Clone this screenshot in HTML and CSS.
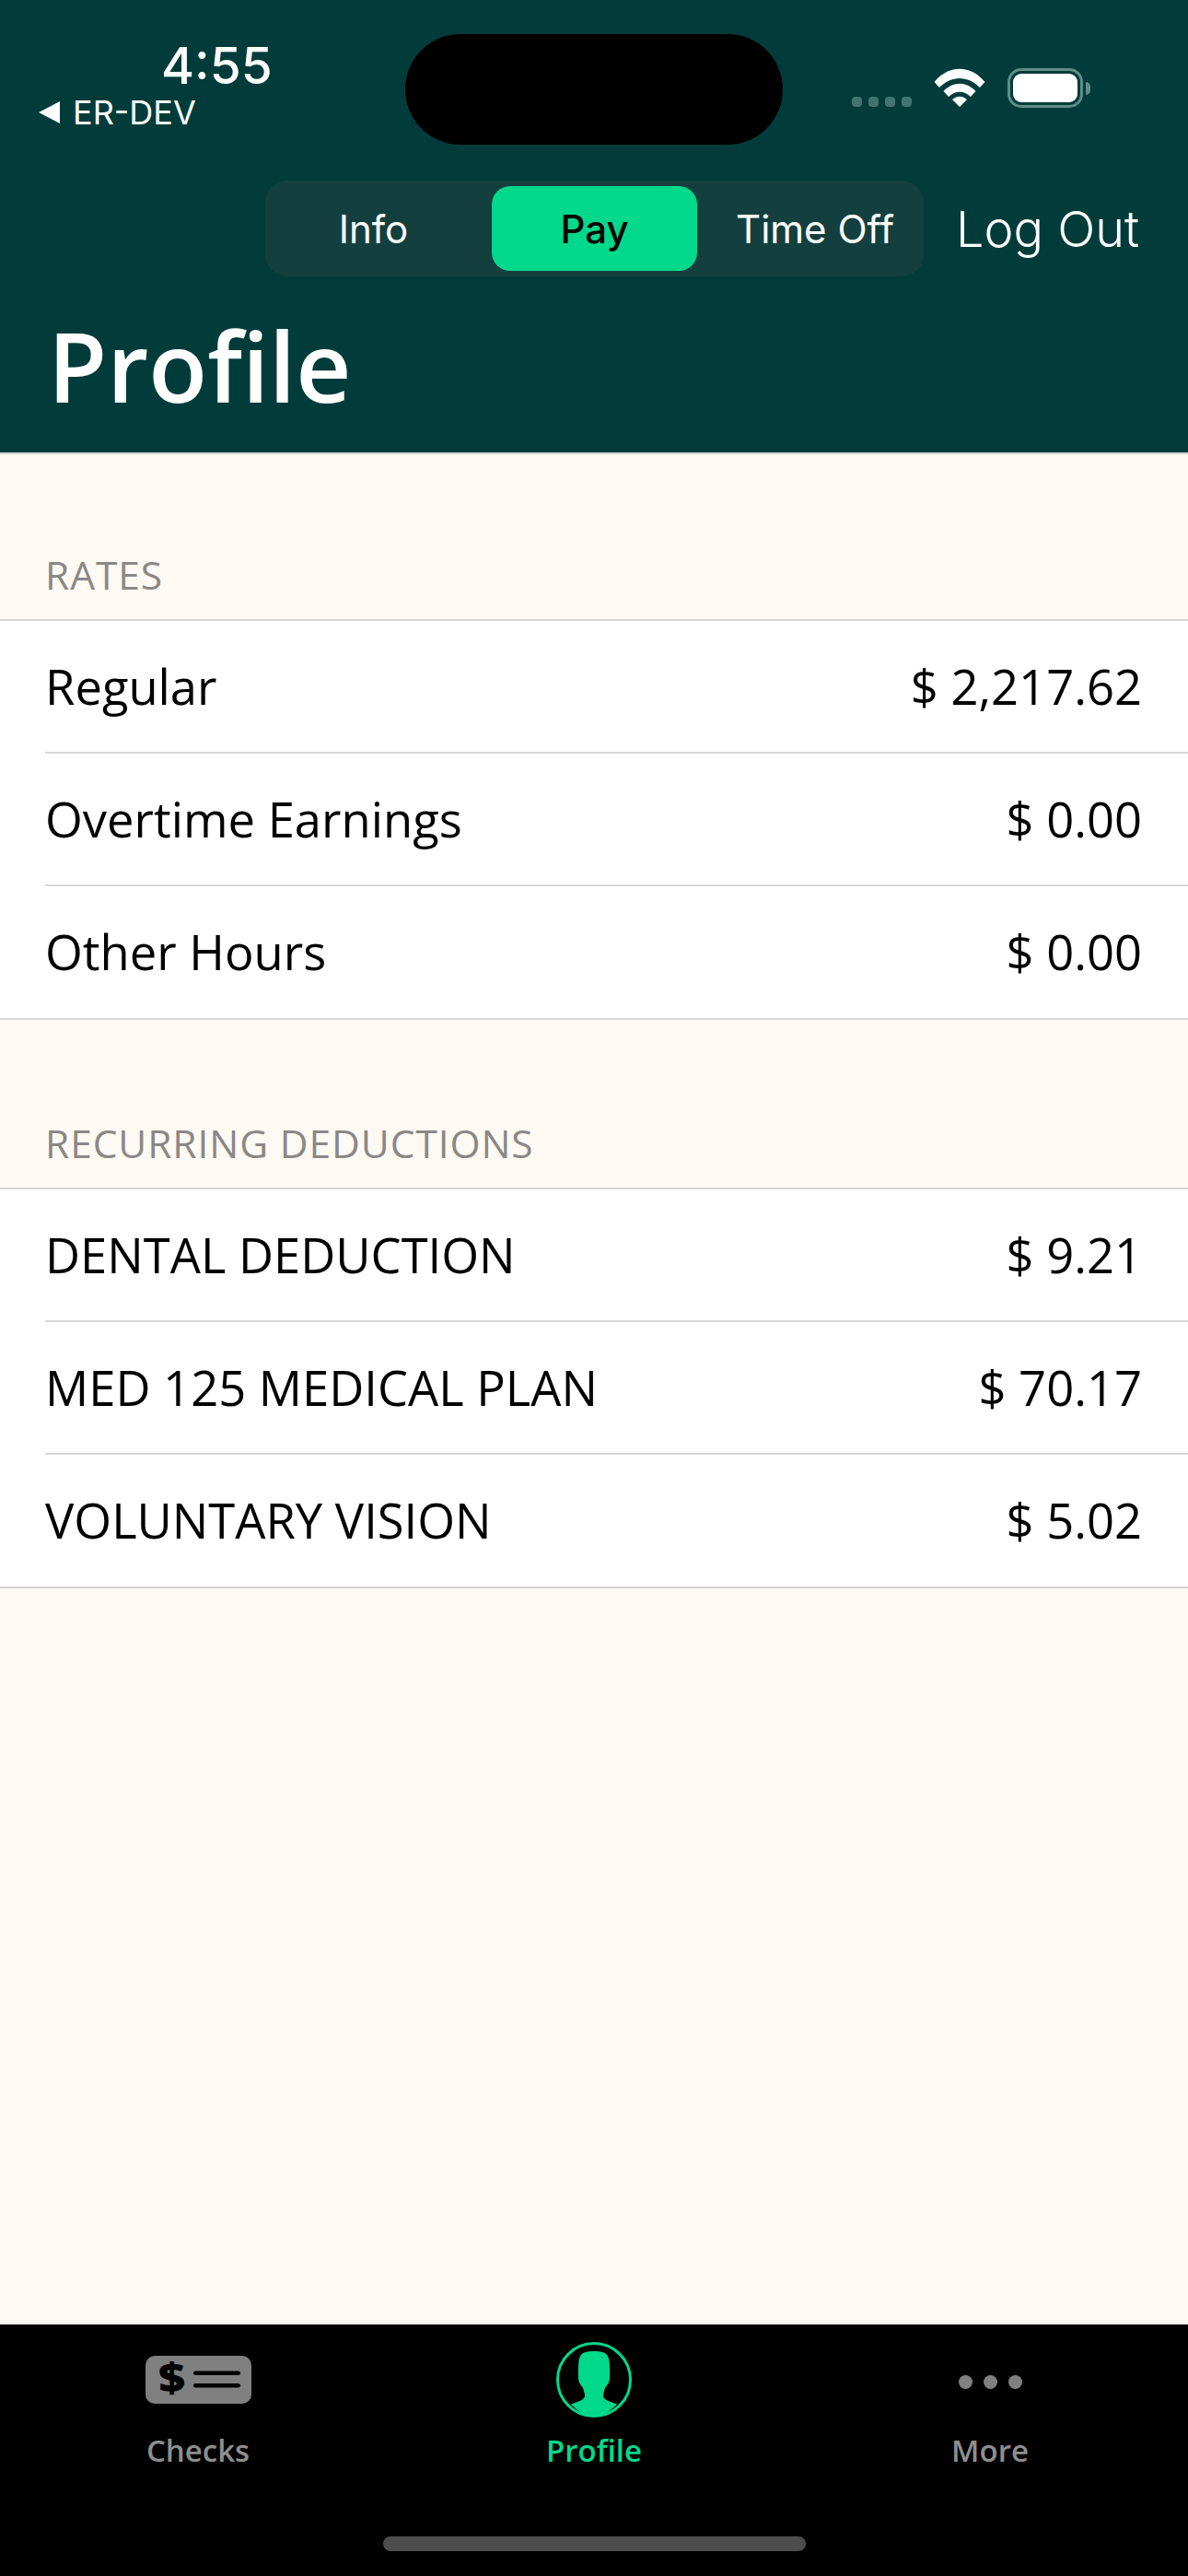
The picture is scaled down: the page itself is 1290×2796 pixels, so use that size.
FILE: index.html
```html
<!DOCTYPE html>
<html lang="en">
<head>
  <meta charset="UTF-8" />
  <meta name="viewport" content="width=device-width, initial-scale=1.0"/>
  <title>Profile</title>
  <link rel="stylesheet" href="styles.css">
</head>
<body>

  <!-- Header -->
  <header class="header">
    <div class="status-bar">
      <div class="status-left">
        <div class="time">4:55</div>
        <div class="back-app"><span class="back-arrow"></span>ER-DEV</div>
      </div>
      <div class="island"></div>
      <div class="status-right">
        <div class="signal"><span></span><span></span><span></span><span></span></div>
        <svg class="wifi" viewBox="0 0 56 42">
          <path d="M0.5 15 C16 -4 40 -4 55.5 15 L50 21 C37 7.5 19 7.5 6 21 Z" fill="#fff"/>
          <path d="M10.5 25 C21 14 35 14 45.5 25 L40 31 C32.5 24 23.5 24 16 31 Z" fill="#fff"/>
          <path d="M20 34 C25 29.5 31 29.5 36 34 L28 42 Z" fill="#fff"/>
        </svg>
        <div class="battery"><div class="battery-fill"></div></div>
        <div class="battery-tip"></div>
      </div>
    </div>

    <div class="top-actions">
      <div class="segments">
        <div class="segment">Info</div>
        <div class="segment active">Pay</div>
        <div class="segment">Time Off</div>
      </div>
      <div class="logout">Log Out</div>
    </div>

    <h1 class="title">Profile</h1>
  </header>

  <!-- Content -->
  <main class="content">
    <section class="group">
      <h2 class="group-title">RATES</h2>
      <div class="list">
        <div class="row"><span>Regular</span><span>$ 2,217.62</span></div>
        <div class="row"><span>Overtime Earnings</span><span>$ 0.00</span></div>
        <div class="row"><span>Other Hours</span><span>$ 0.00</span></div>
      </div>
    </section>

    <section class="group">
      <h2 class="group-title">RECURRING DEDUCTIONS</h2>
      <div class="list">
        <div class="row"><span>DENTAL DEDUCTION</span><span>$ 9.21</span></div>
        <div class="row"><span>MED 125 MEDICAL PLAN</span><span>$ 70.17</span></div>
        <div class="row"><span>VOLUNTARY VISION</span><span>$ 5.02</span></div>
      </div>
    </section>
  </main>

  <!-- Tab bar -->
  <nav class="tabbar">
    <div class="tabs">
      <div class="tab">
        <div class="tab-icon">
          <svg width="115" height="52" viewBox="0 0 115 52">
            <rect width="115" height="52" rx="10" fill="#808080"/>
            <text transform="translate(28.5 40) scale(1.15 1)" class="check-dollar">$</text>
            <rect x="52" y="16.5" width="51" height="4.5" rx="2.2" fill="#000"/>
            <rect x="52" y="30" width="51" height="4.5" rx="2.2" fill="#000"/>
          </svg>
        </div>
        <div class="tab-label">Checks</div>
      </div>
      <div class="tab active">
        <div class="tab-icon">
          <svg width="86" height="86" viewBox="0 0 86 86">
            <circle cx="43" cy="43" r="39.5" fill="#000" stroke="#00d98b" stroke-width="3"/>
            <path d="M43 12 C50 12 55 13 57 16 C59.5 19 60 24 60 30 C60 36 60 38 60 41 C60 46 57 49 55 52 C54 55 53 58 53 60 C53 64 57 66 68 69.5 C60 78 52 82.5 43 82.5 C34 82.5 26 78 18 69.5 C29 66 33 64 33 60 C33 58 32 55 31 52 C29 49 26 46 26 41 C26 38 26 36 26 30 C26 24 26.5 19 29 16 C31 13 36 12 43 12 Z" fill="#00d98b"/>
          </svg>
        </div>
        <div class="tab-label">Profile</div>
      </div>
      <div class="tab">
        <div class="tab-icon">
          <div class="dots"><span></span><span></span><span></span></div>
        </div>
        <div class="tab-label">More</div>
      </div>
    </div>
    <div class="home-bar"></div>
  </nav>

</body>
</html>
```

FILE: styles.css
```css
* {
  margin: 0;
  padding: 0;
  box-sizing: border-box;
}

body {
  display: flex;
  flex-direction: column;
  width: 1290px;
  height: 2796px;
  background-color: #fff9f3;
  font-family: 'Open Sans', sans-serif;
  color: #000;
}

/* Header */
.header {
  height: 493px;
  background-color: #023c3a;
  border-bottom: 2px solid #c9d3d2;
  color: #fff;
}

.status-bar {
  position: relative;
  height: 196px;
  font-family: Inter, sans-serif;
}

.status-left {
  position: absolute;
  top: 41px;
  left: 42px;
}

.time {
  margin-left: 133px;
  font-size: 55px;
  line-height: 61px;
  font-weight: 500;
}

.back-app {
  display: flex;
  align-items: center;
  font-size: 36px;
  line-height: 40px;
}

.back-arrow {
  width: 0;
  height: 0;
  margin-right: 14px;
  border-top: 12px solid transparent;
  border-bottom: 12px solid transparent;
  border-right: 23px solid #fff;
}

.island {
  position: absolute;
  top: 37px;
  left: 440px;
  width: 410px;
  height: 120px;
  border-radius: 60px;
  background-color: #000;
}

.status-right {
  position: absolute;
  top: 74px;
  left: 925px;
  display: flex;
  align-items: flex-start;
}

.signal {
  display: flex;
  gap: 7px;
  margin-top: 31px;
}

.signal span {
  width: 11px;
  height: 11px;
  border-radius: 4px;
  background-color: #437370;
}

.wifi {
  width: 56px;
  height: 42px;
  margin-left: 24px;
}

.battery {
  width: 82px;
  height: 43px;
  margin-left: 24px;
  padding: 3px;
  border: 3px solid #5f8d8a;
  border-radius: 15px;
}

.battery-fill {
  height: 100%;
  border-radius: 9px;
  background-color: #fff;
}

.battery-tip {
  width: 5px;
  height: 14px;
  margin: 15px 0 0 3px;
  border-radius: 0 5px 5px 0;
  background-color: #5f8d8a;
}

.top-actions {
  display: flex;
  align-items: center;
  height: 104px;
  padding-left: 288px;
  font-family: Inter, sans-serif;
}

.segments {
  display: flex;
  width: 715px;
  height: 104px;
  padding: 6px 0;
  border-radius: 24px;
  background-color: #143f3f;
  font-size: 42px;
}

.segment {
  display: flex;
  align-items: center;
  justify-content: center;
  flex: 1;
  padding-left: 10px;
  border-radius: 20px;
}

.segment:first-child {
  flex: none;
  width: 246px;
  padding: 0 11px 0 0;
}

.segment.active {
  flex: none;
  width: 223px;
  padding: 0;
  background-color: #00d98b;
  color: #000;
  font-weight: 500;
}

.logout {
  margin-left: 35px;
  font-size: 54px;
  font-weight: 300;
}

.title {
  margin: 32px 0 0 52px;
  font-size: 104.5px;
  line-height: 130px;
  font-weight: 600;
}

/* Lists */
.content {
  flex: 1;
}

.group-title {
  height: 182px;
  padding: 106px 49px 0;
  font-size: 42.5px;
  line-height: 56px;
  font-weight: 400;
  letter-spacing: 0.9px;
  color: #8a8886;
}

.group:first-child .group-title {
  height: 179px;
  padding-top: 103px;
}

.list {
  border-top: 2px solid #d5d5d3;
  border-bottom: 2px solid #d5d5d3;
  background-color: #fff;
}

.row {
  display: flex;
  justify-content: space-between;
  align-items: center;
  height: 144px;
  margin-left: 49px;
  padding: 0 50px 2px 0;
  border-bottom: 2px solid #d8d8d8;
  font-size: 52.5px;
}

.row:last-child {
  height: 143px;
  border-bottom: none;
}

/* Tab bar */
.tabbar {
  height: 273px;
  background-color: #000;
  color: #8e8e8e;
  font-size: 33px;
  font-weight: 600;
}

.tabs {
  display: grid;
  grid-template-columns: repeat(3, 1fr);
  height: 230px;
}

.tab {
  display: flex;
  flex-direction: column;
  align-items: center;
}

.tab.active {
  color: #00d98b;
}

.tab-icon {
  display: flex;
  align-items: center;
  justify-content: center;
  height: 86px;
  margin-top: 17px;
}

.tab-label {
  margin-top: 11px;
  line-height: 46px;
}

.check-dollar {
  font-family: 'Open Sans', sans-serif;
  font-size: 44px;
  font-weight: 800;
  text-anchor: middle;
  fill: #000;
}

.dots {
  display: flex;
  gap: 12px;
  margin-top: 4px;
}

.dots span {
  width: 15px;
  height: 15px;
  border-radius: 50%;
  background-color: #808080;
}

.home-bar {
  width: 459px;
  height: 16px;
  margin: 0 auto;
  border-radius: 8px;
  background-color: #4d4d4d;
}
```
